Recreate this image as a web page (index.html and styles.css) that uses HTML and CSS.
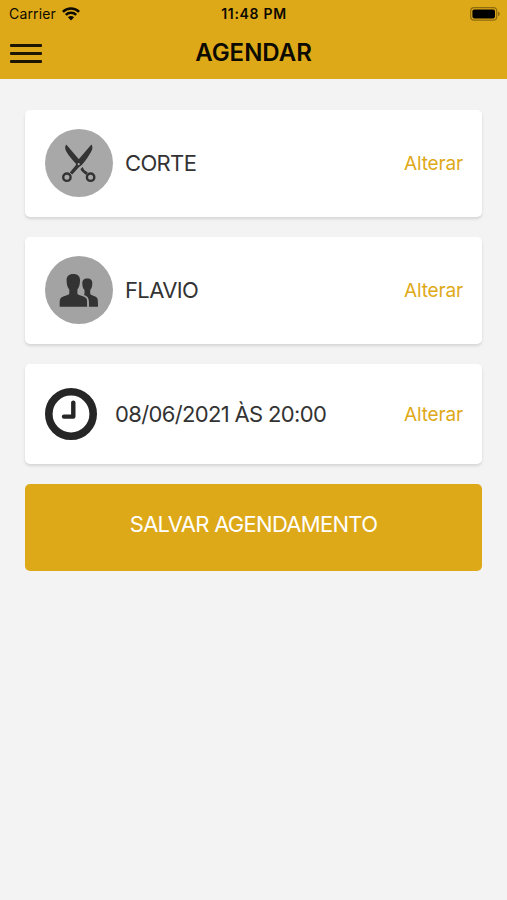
FILE: index.html
```html
<!DOCTYPE html>
<html lang="pt-BR">
<head>
    <meta charset="UTF-8">
    <meta name="viewport" content="width=device-width, initial-scale=1.0">
    <title>Agendar</title>
    <link rel="stylesheet" href="styles.css">
</head>
<body>
    <header class="topo">
        <div class="status">
            <div class="operadora">
                <span>Carrier</span>
                <svg class="wifi" viewBox="0 0 18 14">
                    <path d="M.9 4.9a11.5 11.5 0 0 1 16.2 0M3.8 7.9a7.4 7.4 0 0 1 10.4 0" fill="none" stroke="#0d0a02" stroke-width="2.5"/>
                    <path d="M5.9 10.3a4.6 4.6 0 0 1 6.2 0L9 13.6z" fill="#0d0a02"/>
                </svg>
            </div>
            <span class="hora">11:48 PM</span>
            <svg class="bateria" viewBox="0 0 30 14">
                <rect x=".7" y=".7" width="26" height="12.4" rx="3.4" fill="none" stroke="#8d6b10" stroke-width="1.2"/>
                <rect x="2.4" y="2.4" width="22.6" height="9" rx="1.8" fill="#000"/>
                <path d="M28 4.6q1.8.8 1.8 2.3T28 9.2z" fill="#8d6b10"/>
            </svg>
        </div>
        <div class="barra">
            <div class="menu">
                <span></span>
                <span></span>
                <span></span>
            </div>
            <h1>AGENDAR</h1>
        </div>
    </header>

    <main class="conteudo">
        <!-- Serviço -->
        <div class="card">
            <svg class="icone" viewBox="0 0 68 68">
                <circle cx="34" cy="34" r="34" fill="#a8a8a8"/>
                <g fill="#333">
                    <path d="M21.2 15.6c-1.6 2-1.2 4.8.4 7.4 2.2 4 6 8.2 10 12.4l3.6-3.6z"/>
                    <path d="M46.4 15.6c1.6 2 1.2 4.8-.4 7.4-2.2 4-5.6 8.8-9 12.8l-3.4 2.8-6.4 7-2.4-2 5.8-7.2 1.2-4z"/>
                    <path d="M35.4 40.2l2.2-2.2 1.6 3 3.6 2.6-1.6 2.4-4-3.2z"/>
                </g>
                <g fill="none" stroke="#333" stroke-width="2.4">
                    <circle cx="21.9" cy="48.2" r="3.7"/>
                    <circle cx="45.6" cy="48.2" r="3.7"/>
                </g>
                <circle cx="33.7" cy="35.2" r="1.1" fill="#a8a8a8"/>
            </svg>
            <span class="nome">CORTE</span>
            <a class="alterar">Alterar</a>
        </div>

        <!-- Profissional -->
        <div class="card">
            <svg class="icone" viewBox="0 0 68 68">
                <circle cx="34" cy="34" r="34" fill="#a3a3a3"/>
                <g fill="#333">
                    <path d="M28.3 18c4.6 0 6.9 2.4 6.7 6.6 0 4.3-1.2 7.3-2.6 8.9v4.3c0 1.4 7.6 2.2 9.2 4.9.7 1.4.5 4.7.5 8H14.7c0-3.3-.2-6.6.6-8 1.5-2.7 9-3.5 9-4.9v-4.3c-1.6-1.6-2.7-4.6-2.7-8.9-.2-4.2 2.1-6.6 6.7-6.6z"/>
                    <path d="M42.3 22.6c3.6 0 5.2 2 5 5 0 3.3-.9 5.3-2.1 6.5v3.7c0 1.4 6 2.2 7.2 4.6.6 1.3.6 4.8.6 8.3h-9c0-3.5.1-6.6-.9-8.6-.7-1.5-2.3-2.4-4.1-3.1.4-.5.5-.8.5-1.4v-3.5c-1.3-1.2-2.2-3.2-2.2-6.5-.1-3 1.4-5 5-5z"/>
                </g>
            </svg>
            <span class="nome">FLAVIO</span>
            <a class="alterar">Alterar</a>
        </div>

        <!-- Data e hora -->
        <div class="card card-data">
            <svg class="relogio" viewBox="0 0 52 52">
                <circle cx="26" cy="26" r="22.2" fill="none" stroke="#262626" stroke-width="7.6"/>
                <path d="M28.3 14.6V28.6H19" fill="none" stroke="#262626" stroke-width="4.4" stroke-linecap="round" stroke-linejoin="round"/>
            </svg>
            <span class="nome">08/06/2021 ÀS 20:00</span>
            <a class="alterar">Alterar</a>
        </div>

        <button class="salvar">SALVAR AGENDAMENTO</button>
    </main>
</body>
</html>
```
FILE: styles.css
```css
body {
    font-family: Inter, "Liberation Sans", sans-serif;
    margin: 0;
    min-height: 100vh;
    background-color: #f3f3f3;
    color: #333;
}
.topo {
    height: 79px;
    background-color: #dea918;
    color: #0d0a02;
}
.status {
    display: grid;
    grid-template-columns: 1fr auto 1fr;
    align-items: center;
    height: 27px;
    padding: 0 7px 0 8px;
    font-size: 14px;
}
.operadora {
    display: flex;
    align-items: center;
    gap: 6px;
    padding-left: 1px;
    letter-spacing: 0.15px;
}
.wifi {
    width: 18px;
    height: 14px;
}
.hora {
    font-weight: 600;
    letter-spacing: 0.7px;
}
.bateria {
    width: 30px;
    height: 14px;
    justify-self: end;
}
.barra {
    display: grid;
    grid-template-columns: 32px 1fr 32px;
    align-items: center;
    height: 51px;
    padding: 0 10px;
}
.menu {
    display: flex;
    flex-direction: column;
    gap: 5px;
    padding-top: 1px;
}
.menu span {
    height: 3px;
    border-radius: 1px;
    background-color: #1c1503;
}
.barra h1 {
    margin: 0;
    font-size: 24px;
    font-weight: 600;
    text-align: center;
}
.conteudo {
    display: flex;
    flex-direction: column;
    gap: 20px;
    padding: 31px 25px;
}
.card {
    display: flex;
    align-items: center;
    height: 107px;
    box-sizing: border-box;
    padding: 0 19px 1px 20px;
    background-color: #fff;
    border-radius: 5px;
    box-shadow: 0 2px 3px rgba(0, 0, 0, 0.12);
}
.card-data {
    height: 100px;
    padding-bottom: 0;
}
.icone {
    width: 68px;
    height: 68px;
    margin-right: 12px;
}
.relogio {
    width: 52px;
    height: 52px;
    margin-right: 18px;
}
.nome {
    font-size: 22px;
    letter-spacing: -0.65px;
}
.alterar {
    margin-left: auto;
    font-size: 19px;
    letter-spacing: -0.15px;
    color: #dea918;
}
.salvar {
    height: 87px;
    padding: 0 0 7px;
    border: none;
    border-radius: 5px;
    background-color: #dea918;
    color: #fff;
    font-family: inherit;
    font-size: 22px;
    letter-spacing: -0.72px;
}
```
